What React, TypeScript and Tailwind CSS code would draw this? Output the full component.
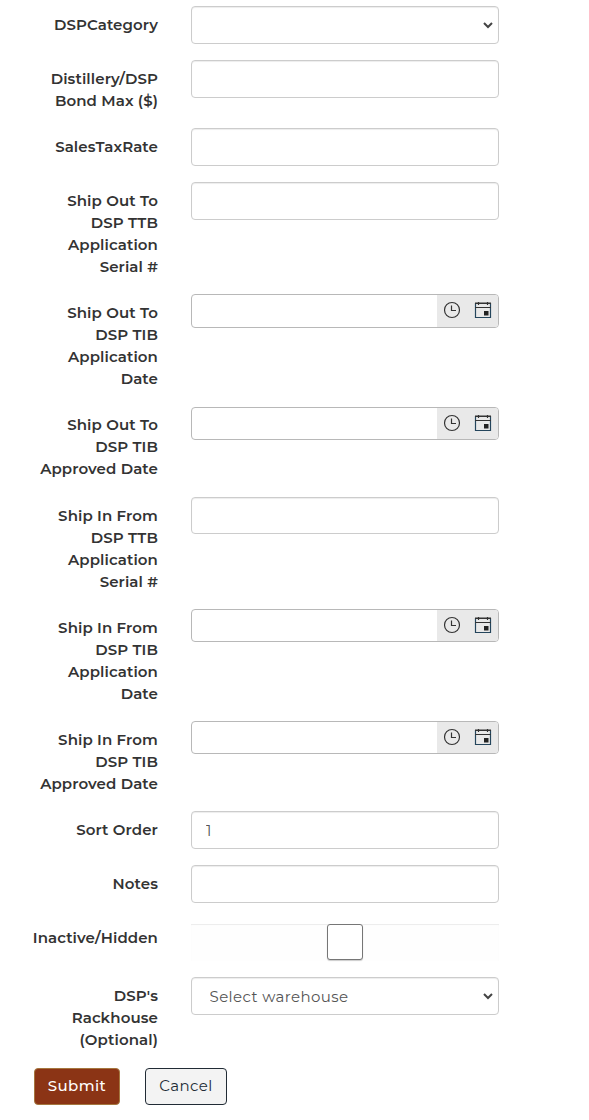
import { ReactNode } from 'react';
import { clsx } from 'clsx';

type FieldKind = 'text' | 'select' | 'datetime' | 'checkbox';

interface Field {
  label: string[];
  kind: FieldKind;
  row: string;
  control?: string;
  value?: string;
}

const FIELDS: Field[] = [
  { label: ['DSPCategory'], kind: 'select', row: 'h-[54px]' },
  { label: ['Distillery/DSP', 'Bond Max ($)'], kind: 'text', row: 'h-[68px]' },
  { label: ['SalesTaxRate'], kind: 'text', row: 'h-[54px]' },
  { label: ['Ship Out To', 'DSP TTB', 'Application', 'Serial #'], kind: 'text', row: 'h-[112px]' },
  { label: ['Ship Out To', 'DSP TIB', 'Application', 'Date'], kind: 'datetime', row: 'h-[112px]', control: 'h-[34px]' },
  { label: ['Ship Out To', 'DSP TIB', 'Approved Date'], kind: 'datetime', row: 'h-[91px]', control: 'mt-px h-[33px]' },
  { label: ['Ship In From', 'DSP TTB', 'Application', 'Serial #'], kind: 'text', row: 'h-[112px]', control: 'h-[37px]' },
  { label: ['Ship In From', 'DSP TIB', 'Application', 'Date'], kind: 'datetime', row: 'h-[112px]', control: 'h-[33px]' },
  { label: ['Ship In From', 'DSP TIB', 'Approved Date'], kind: 'datetime', row: 'h-[90px]', control: 'h-[33px]' },
  { label: ['Sort Order'], kind: 'text', row: 'h-[54px]', value: '1' },
  { label: ['Notes'], kind: 'text', row: 'h-[54px]' },
  { label: ['Inactive/Hidden'], kind: 'checkbox', row: 'h-[58px]' },
  { label: ["DSP's", 'Rackhouse', '(Optional)'], kind: 'select', row: 'h-[91px]', value: 'Select warehouse' },
];

const CONTROL = 'block w-full rounded border border-[#ccc] bg-white text-[15px] text-[#555] shadow-[inset_0_1px_1px_rgba(0,0,0,0.075)]';

function ClockIcon() {
  return (
    <svg width="18" height="18" viewBox="0 0 18 18" fill="none" stroke="#333" strokeWidth="1.2">
      <circle cx="9" cy="9" r="7.5" />
      <path d="M8.5 4.5v5H13" />
    </svg>
  );
}

function CalendarIcon() {
  return (
    <svg width="18" height="18" viewBox="0 0 18 18" fill="none" stroke="#24455c" strokeWidth="1.2">
      <path d="M1.5 2v14.5h15V2" />
      <path d="M1 2.2h16" stroke="#333" strokeWidth="1.6" />
      <path d="M1 6.5h16M4.5 1v3M13.5 1v3" stroke="#333" />
      <path d="M10 10h4.5v4.5H10z" fill="#222" stroke="none" />
    </svg>
  );
}

function renderControl({ kind, control, value }: Field): ReactNode {
  if (kind === 'select') {
    return (
      <div className="relative">
        <select className={clsx(CONTROL, 'h-[38px] appearance-none pt-[2px] pr-6 pl-[17.5px] tracking-[0.4px]')}>
          <option>{value ?? ''}</option>
        </select>
        <svg
          className="pointer-events-none absolute top-4 right-[6px]"
          width="10"
          height="7"
          viewBox="0 0 10 7"
          fill="none"
          stroke="#444"
          strokeWidth="2"
        >
          <path d="M1 1l4 4 4-4" />
        </svg>
      </div>
    );
  }

  if (kind === 'datetime') {
    return (
      <div className={clsx('flex overflow-hidden rounded border border-[#b8b8b8] bg-white', control)}>
        <input className="min-w-0 flex-1 px-3 text-[15px] outline-none" />
        <div className="flex w-[61px] items-start gap-[13px] bg-[#e9e9e9] pt-[6px] pl-[6px]">
          <button type="button" aria-label="Time"><ClockIcon /></button>
          <button type="button" aria-label="Date"><CalendarIcon /></button>
        </div>
      </div>
    );
  }

  if (kind === 'checkbox') {
    return (
      <div className="mt-[5px] flex h-[37px] justify-center bg-[#fefefe] shadow-[inset_0_1px_1px_rgba(0,0,0,0.075)]">
        <input
          type="checkbox"
          className="h-9 w-9 appearance-none rounded-[3px] border border-[#767676] bg-white shadow-[0_1px_1px_rgba(0,0,0,0.2)]"
        />
      </div>
    );
  }

  return <input className={clsx(CONTROL, 'px-[14px]', control ?? 'h-[38px]')} defaultValue={value} />;
}

export default function App() {
  return (
    <form className="min-h-[1120px] w-[589px] bg-white pt-[6px] font-['Montserrat',sans-serif] text-[15px] text-[#333]">
      {FIELDS.map((field, i) => (
        <div key={i} className={clsx('flex items-start', field.row)}>
          <label className="flex w-[158px] shrink-0 flex-col items-end pt-2 leading-[22px] font-semibold whitespace-nowrap tracking-[0.1px]">
            {field.label.map((line) => <span key={line}>{line}</span>)}
          </label>
          <div className="ml-[33px] w-[308px]">{renderControl(field)}</div>
        </div>
      ))}

      <div className="flex gap-[25px] pl-[34px]">
        <button type="button" className="h-[37px] w-[86px] rounded border border-[#a5763e] bg-[#8b3415] font-medium tracking-[0.4px] text-white">
          Submit
        </button>
        <button type="button" className="h-[37px] w-[82px] rounded border border-[#212b35] bg-[#f3f3f3] tracking-[0.4px] text-[#212b35]">
          Cancel
        </button>
      </div>
    </form>
  );
}
